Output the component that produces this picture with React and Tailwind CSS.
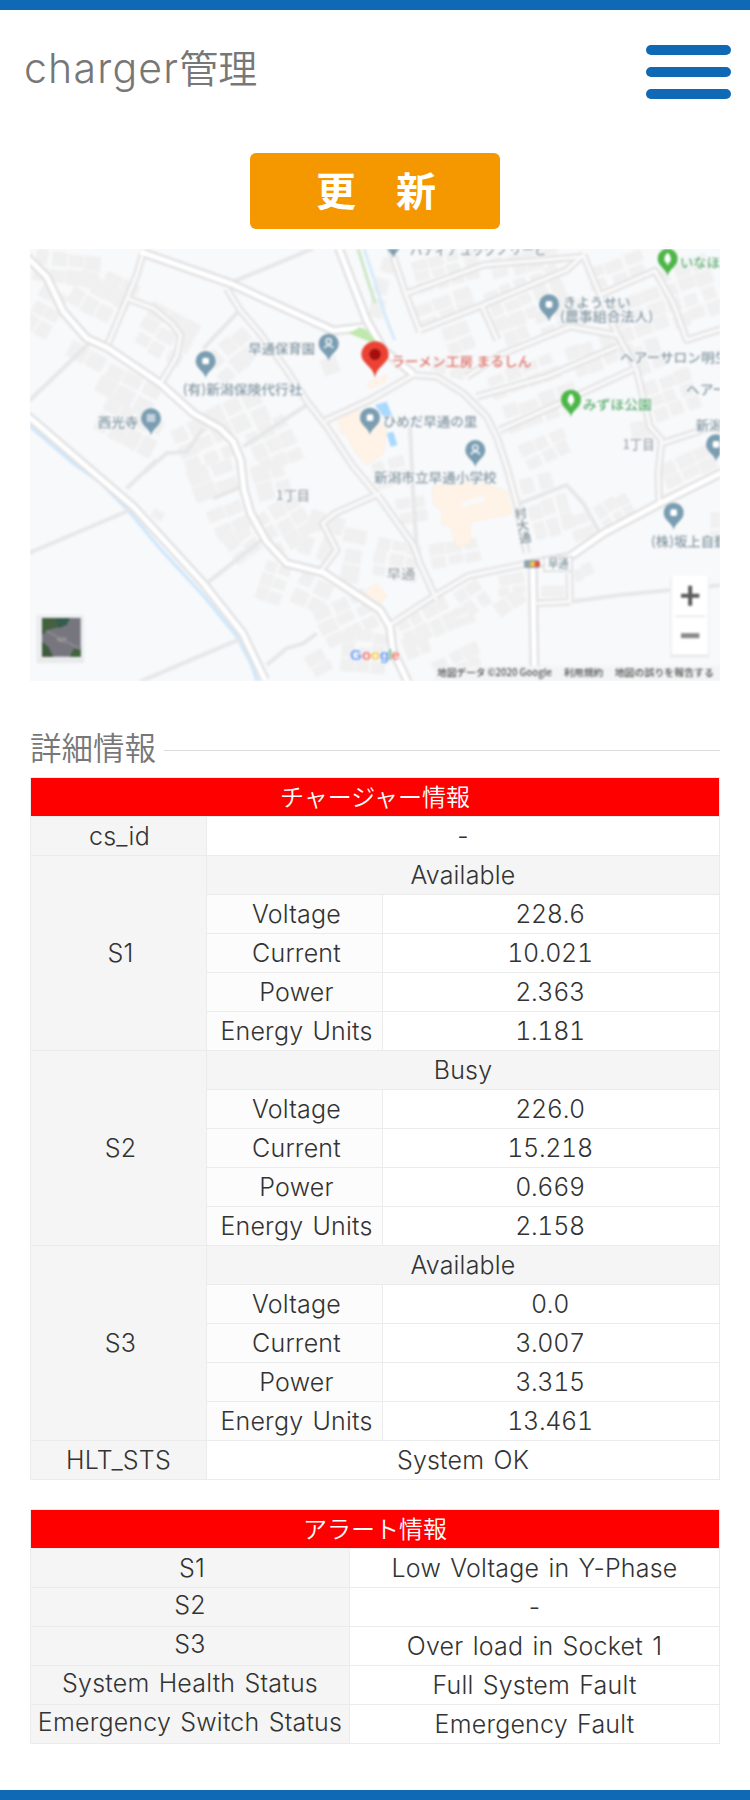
const SANS = "font-['Inter','Noto_Sans_CJK_JP',sans-serif]";
const CJK = "font-['Noto_Sans_CJK_JP',sans-serif]";

/* ---------- map data (map units: 3 per CSS pixel) ---------- */

const mainRoads = [
  "M20 50L80 110L130 215L200 295L265 325L420 430L520 520L600 565L640 605L662 660L672 750L692 820L740 905L800 970L910 998L990 1050L1080 1110L1110 1160L1118 1230L1170 1340",
  "M360 35L630 130L940 272L1030 262",
  "M955 20L1040 240L1090 330L1180 402",
  "M550 1030L340 800L200 680L20 525",
  "M550 1030L668 1180L735 1320",
  "M2110 695L1920 790L1750 880L1650 950L1530 972",
  "M1538 960L1544 1330",
];

const minorRoads = [
  "M372 30L350 105L320 178L265 310",
  "M320 175L400 205L455 250L482 285L470 350L425 425",
  "M620 145L660 210L720 280L800 390L865 490L920 560L1000 680L1080 775L1180 915L1200 970L1250 1080",
  "M915 542L1050 480L1180 405",
  "M1180 405L1250 410L1330 460L1400 530L1430 590L1460 680L1490 790L1520 940",
  "M1110 20L1160 170L1200 275",
  "M1160 160L1390 75L1690 50",
  "M1200 270L1390 195L1640 90L1690 45",
  "M1385 195L1432 300",
  "M1340 410L1440 345L1650 260L1790 285",
  "M1690 45L1740 165L1790 280L1850 390L1890 560L1925 600L1915 700L1918 790",
  "M1740 165L1905 92L1960 190L2000 300L2120 262",
  "M1370 470L1580 410L1790 320",
  "M1440 570L1620 490L1840 388",
  "M1925 610L2110 550",
  "M1525 970L1345 1008L1240 1070L1110 1155",
  "M1080 760L945 820L908 850L950 930L905 990",
  "M1550 1090L1650 1085",
  "M1648 1000L1650 1088",
];

const alleys = [
  "M640 125L880 25",
  "M660 210L550 325",
  "M20 490L205 312L240 310",
  "M865 492L670 620",
  "M550 565L500 635L440 640L370 700",
  "M320 745L410 660",
  "M20 942L330 810",
  "M560 1030L725 900",
  "M360 1325L665 1195",
  "M740 1275L800 1225L850 1210L890 1180",
  "M1170 560L1180 780L1190 920",
  "M1500 790L1640 735L1690 790L1740 880",
  "M1650 1085L1800 1065L2110 1035",
  "M580 775L665 740",
];

// clusters of houses: [x, y, width, height, rotation, columns, rows]
const clusters = [
  [40, 35, 200, 100, 8, 4, 2], [30, 140, 90, 150, 30, 2, 3], [150, 110, 150, 120, 30, 3, 2],
  [240, 110, 110, 90, 25, 2, 2], [355, 210, 170, 150, 28, 3, 3], [560, 290, 160, 110, -40, 3, 2],
  [140, 320, 120, 60, 30, 2, 1], [230, 390, 190, 110, 28, 3, 2], [230, 500, 200, 120, 28, 4, 2],
  [470, 530, 170, 150, -25, 3, 3], [560, 470, 180, 110, -25, 3, 2], [690, 540, 140, 150, -25, 3, 3],
  [900, 350, 70, 70, -20, 1, 1], [510, 665, 140, 110, -20, 2, 2], [700, 660, 110, 120, -15, 2, 2],
  [570, 790, 110, 100, -25, 2, 2], [620, 870, 90, 90, -35, 2, 2], [720, 780, 150, 150, -30, 3, 3],
  [850, 810, 110, 150, 20, 2, 2], [960, 860, 70, 170, 10, 1, 3], [720, 960, 80, 130, 20, 2, 3],
  [820, 1010, 110, 100, 25, 2, 2], [890, 1070, 180, 130, -25, 3, 3], [860, 1230, 80, 80, -30, 1, 2],
  [960, 1170, 140, 130, 5, 3, 3], [395, 800, 40, 40, 30, 1, 1],
  [1180, 40, 200, 100, -15, 4, 3], [1410, 30, 210, 70, -15, 4, 2], [1180, 165, 190, 80, -20, 3, 2],
  [1400, 110, 240, 130, -22, 5, 3], [1270, 250, 90, 90, -20, 2, 2], [1440, 220, 90, 90, -20, 2, 2],
  [1545, 190, 170, 90, -20, 3, 2], [1700, 55, 180, 80, -20, 3, 2], [1770, 160, 170, 130, -20, 3, 3],
  [1930, 60, 160, 190, -20, 3, 4], [1640, 290, 200, 100, -20, 4, 2], [1400, 370, 220, 80, -20, 4, 2],
  [1440, 460, 240, 90, -20, 4, 2], [1500, 580, 150, 90, -25, 3, 2], [1830, 300, 110, 100, -20, 2, 2],
  [1880, 400, 150, 130, -20, 3, 3], [1830, 540, 60, 60, -10, 1, 1], [1230, 360, 120, 50, 20, 2, 1],
  [1060, 50, 50, 190, 15, 1, 3], [1060, 650, 100, 90, -15, 2, 2], [1130, 770, 90, 80, -10, 2, 2],
  [1500, 700, 100, 60, -15, 2, 1], [1530, 770, 130, 120, -15, 3, 2], [1730, 770, 110, 90, -30, 3, 2],
  [1650, 820, 70, 80, -20, 1, 2], [1920, 640, 170, 80, -25, 3, 2], [1230, 900, 150, 80, -10, 3, 2],
  [1060, 900, 140, 120, 10, 3, 3], [1430, 1000, 90, 70, -10, 2, 2], [1560, 1030, 80, 50, 0, 1, 1],
  [1310, 1030, 90, 90, -35, 2, 2], [1130, 1090, 180, 110, -25, 4, 2], [1420, 1060, 100, 60, -35, 2, 1],
  [1300, 1090, 60, 70, -20, 1, 2], [1240, 1230, 150, 80, -25, 3, 2], [1150, 1180, 80, 70, -20, 2, 1],
  [1650, 970, 70, 50, -20, 2, 1], [2070, 810, 40, 110, 0, 1, 2],
];

const houses = (() => {
  let seed = 7;
  const rnd = () => {
    seed = (seed * 16807) % 2147483647;
    return seed / 2147483647;
  };
  const out = [];
  clusters.forEach(([x, y, w, h, r, cols, rows]) => {
    const cw = w / cols;
    const ch = h / rows;
    for (let i = 0; i < cols; i++) {
      for (let j = 0; j < rows; j++) {
        const bw = cw * (0.72 + rnd() * 0.28);
        const bh = ch * (0.7 + rnd() * 0.3);
        out.push({
          x: x + i * cw + rnd() * (cw - bw),
          y: y + j * ch + rnd() * (ch - bh),
          w: bw,
          h: bh,
          t: `rotate(${r} ${x + w / 2} ${y + h / 2})`,
        });
      }
    }
  });
  return out;
})();

function Pin({ x, y, color = "#7a9db1", kind = "dot" }) {
  return (
    <g transform={`translate(${x} ${y})`}>
      <path d="M0 50C-3 28 -30 22 -30 -2A30 30 0 0 1 30 -2C30 22 3 28 0 50Z" fill={color} />
      {kind === "dot" && <rect x="-10" y="-12" width="20" height="20" rx="5" fill="#fff" />}
      {kind === "tree" && <path d="M0 -20C11 -12 12 4 6 9H3V16H-3V9H-6C-12 4 -11 -12 0 -20Z" fill="#fff" />}
      {kind === "school" && (
        <g fill="none" stroke="#e8f0f4" strokeWidth="5">
          <circle cy="-9" r="8" />
          <path d="M-13 12C-9 0 9 0 13 12" />
        </g>
      )}
      {kind === "temple" && <rect x="-13" y="-15" width="26" height="24" rx="4" fill="#c3d3dc" />}
    </g>
  );
}

function Label({ x, y, w, children, fill = "#8699a3", size = 39, halo = true }) {
  return (
    <text
      x={x}
      y={y}
      textLength={w}
      lengthAdjust="spacingAndGlyphs"
      fontSize={size}
      fill={fill}
      stroke={halo ? "#f8f9fb" : "none"}
      strokeWidth={halo ? 6 : 0}
      paintOrder="stroke"
    >
      {children}
    </text>
  );
}

function MapView() {
  return (
    <div className="relative h-[432px] w-[690px] overflow-hidden bg-[#f8f9fb]">
      <svg viewBox="30 27 2070 1296" className={`block h-full w-full font-medium blur-[0.8px] ${CJK}`}>
        <g fill="#f0f0f0">
          {houses.map((b, i) => (
            <rect key={i} x={b.x} y={b.y} width={b.w} height={b.h} rx="4" transform={b.t} />
          ))}
        </g>
        <g fill="#fff3e7" stroke="#fdebd9" strokeWidth="3">
          <path d="M955 540L1010 510L1100 560L1090 640L1040 675L1010 640L980 585L965 580Z" />
          <path d="M1240 740L1370 725L1460 755L1475 820L1350 845L1350 910L1310 920L1295 860L1265 850L1270 820L1240 790Z" />
          <path d="M1045 430L1100 405L1095 425L1050 445Z" />
          <path d="M1040 1050L1070 1030L1098 1065L1080 1095L1035 1080Z" />
          <path d="M1120 95L1140 82L1150 105L1130 115Z" />
        </g>
        <path d="M1320 790L1395 765L1390 785L1330 800Z" fill="#f8f9fb" />
        <g fill="#a9d9fd">
          <path d="M1065 495L1100 485L1118 530L1090 530Z" />
          <path d="M1100 580L1120 575L1132 615L1112 620Z" />
        </g>
        <g fill="none" strokeLinejoin="round">
          <path d="M20 550L165 674L240 726L325 812L424 930L553 1070L648 1186L692 1268L714 1330" stroke="#cfe7fb" strokeWidth="10" />
          <path d="M1030 20L1060 110L1100 240L1124 300" stroke="#d6eafb" strokeWidth="9" />
          <path d="M1012 20L1040 110L1065 190" stroke="#cfe8cb" strokeWidth="10" />
          <g stroke="#e6e7e8" strokeWidth="12">{alleys.map((d) => <path key={d} d={d} />)}</g>
          <g stroke="#e5e5e6" strokeWidth="24">{minorRoads.map((d) => <path key={d} d={d} />)}</g>
          <g stroke="#e2e2e3" strokeWidth="30">{mainRoads.map((d) => <path key={d} d={d} />)}</g>
          <g stroke="#f9f9fa" strokeWidth="10">{minorRoads.map((d) => <path key={d} d={d} />)}</g>
          <g stroke="#fff" strokeWidth="15">{mainRoads.map((d) => <path key={d} d={d} />)}</g>
        </g>
        <path d="M985 280L1020 262L1040 270L1070 305L1050 305Z" fill="#bfe8ae" />

        <Label x={685} y={339} w={200}>早通保育園</Label>
        <Label x={488} y={461} w={360}>(有)新潟保険代行社</Label>
        <Label x={233} y={562} w={122}>西光寺</Label>
        <Label x={1113} y={379} w={422} fill="#dd6f66">ラーメン工房 まるしん</Label>
        <Label x={1088} y={559} w={284}>ひめだ早通の里</Label>
        <Label x={1628} y={201} w={204}>きようせい</Label>
        <Label x={1620} y={244} w={280}>(農事組合法人)</Label>
        <Label x={1800} y={366} w={325}>ヘアーサロン明生</Label>
        <Label x={1998} y={462} w={160}>ヘアーズ</Label>
        <Label x={1688} y={506} w={208} fill="#5fae72">みずほ公園</Label>
        <Label x={1980} y={80} w={120} fill="#5fae72">いなほ</Label>
        <Label x={1808} y={626} w={96} fill="#a3a9ad">1丁目</Label>
        <Label x={2027} y={569} w={120}>新潟県</Label>
        <Label x={1062} y={725} w={368}>新潟市立早通小学校</Label>
        <Label x={768} y={780} w={102} fill="#a3a9ad">1丁目</Label>
        <Label x={1100} y={1013} w={86} fill="#a3a9ad">早通</Label>
        <Label x={1893} y={918} w={270}>(株)坂上自動車</Label>
        <Label x={1170} y={41} w={410}>パティアュッグノリービ</Label>
        <text x="0" y="0" fontSize="37" fill="#8a9aa3" className="[writing-mode:vertical-rl]" transform="translate(1499 802) rotate(-10)">村大通</text>
        <rect x="1572" y="950" width="84" height="44" fill="#fafafa" stroke="#d5dadd" strokeWidth="4" />
        <Label x={1584} y={985} w={62} size={33} halo={false}>早通</Label>
        <rect x="1512" y="960" width="48" height="24" rx="6" fill="#93a3ab" />
        <circle cx="1538" cy="972" r="8" fill="#f6c445" />
        <circle cx="1552" cy="972" r="8" fill="#ea4e3d" />

        <Pin x={926} y={313} kind="school" />
        <Pin x={557} y={365} />
        <Pin x={393} y={537} kind="temple" />
        <Pin x={1050} y={535} />
        <Pin x={1120} y={5} />
        <Pin x={1587} y={195} />
        <Pin x={1366} y={632} kind="school" />
        <Pin x={1961} y={820} />
        <Pin x={2088} y={615} />
        <Pin x={1943} y={58} color="#4cb648" kind="tree" />
        <Pin x={1653} y={481} color="#4cb648" kind="tree" />
        <path d="M1065 414C1060 378 1024 372 1024 343A41 39 0 0 1 1106 343C1106 372 1070 378 1065 414Z" fill="#ea4335" />
        <circle cx="1065" cy="343" r="17" fill="#a50e0e" />

        <text y="1259" fontSize="46" fontWeight="700" stroke="#f8f9fb" strokeWidth="5" paintOrder="stroke" className="font-['Liberation_Sans',sans-serif]">
          <tspan x="990" fill="#6f9ff5">G</tspan>
          <tspan x="1025" fill="#ec7f77">o</tspan>
          <tspan x="1052" fill="#f8ce5c">o</tspan>
          <tspan x="1079" fill="#6f9ff5">g</tspan>
          <tspan x="1104" fill="#79c08b">l</tspan>
          <tspan x="1114" fill="#ec7f77">e</tspan>
        </text>

        <rect x="1245" y="1278" width="860" height="50" fill="#f3f4f5" />
        <Label x={1252} y={1307} w={344} size={29} fill="#4c4c4c" halo={false}>地図データ ©2020 Google</Label>
        <Label x={1632} y={1307} w={118} size={29} fill="#4c4c4c" halo={false}>利用規約</Label>
        <Label x={1784} y={1307} w={298} size={29} fill="#4c4c4c" halo={false}>地図の誤りを報告する</Label>

        <rect x="50" y="1126" width="142" height="144" rx="6" fill="#e9eaec" />
        <rect x="56" y="1124" width="132" height="132" fill="#ebecee" />
        <rect x="66" y="1134" width="116" height="116" fill="#77767f" />
        <g>
          <path d="M66 1134H110L120 1160L90 1168L66 1185Z" fill="#44603f" />
          <path d="M108 1134H150L140 1155L116 1164Z" fill="#335c4c" />
          <path d="M66 1205L85 1220L100 1250H66Z" fill="#3f5c3c" />
          <path d="M160 1228L182 1222V1250H150Z" fill="#42643d" />
          <path d="M112 1190L140 1194L136 1208L112 1202Z" fill="#a79c92" />
          <path d="M78 1172L182 1228" stroke="#888790" strokeWidth="7" fill="none" />
        </g>

        <rect x="1950" y="1010" width="118" height="244" rx="6" fill="#ecedef" />
        <rect x="1955" y="1007" width="109" height="236" rx="4" fill="#fff" />
        <path d="M1966 1129H2056" stroke="#ededed" strokeWidth="6" />
        <path d="M1983 1067H2038M2010.500 1037V1097" stroke="#5c5c5c" strokeWidth="12" />
        <path d="M1983 1187H2038" stroke="#8a8a8a" strokeWidth="15" />
      </svg>
    </div>
  );
}

/* ---------- tables ---------- */

const sockets = [
  { id: "S1", status: "Available", values: ["228.6", "10.021", "2.363", "1.181"] },
  { id: "S2", status: "Busy", values: ["226.0", "15.218", "0.669", "2.158"] },
  { id: "S3", status: "Available", values: ["0.0", "3.007", "3.315", "13.461"] },
];
const metrics = ["Voltage", "Current", "Power", "Energy Units"];

const alerts = [
  ["S1", "Low Voltage in Y-Phase"],
  ["S2", "-"],
  ["S3", "Over load in Socket 1"],
  ["System Health Status", "Full System Fault"],
  ["Emergency Switch Status", "Emergency Fault"],
];

function Cell({ className = "bg-white", children }) {
  return (
    <div className={`flex items-center justify-center whitespace-nowrap leading-[38px] ${className}`}>{children}</div>
  );
}

function TableTitle({ className, children }) {
  return (
    <div className={`flex items-center justify-center bg-[#ff0000] pb-0.5 text-2xl font-[350] leading-none tracking-normal text-white ${CJK} ${className}`}>
      {children}
    </div>
  );
}

const tableText = "text-[25px] font-light tracking-[0.2px] [word-spacing:2px] text-[#333]";

export default function App() {
  return (
    <div className={`flex h-[1800px] w-[750px] flex-col border-y-10 border-[#1069b4] bg-white ${SANS}`}>
      <header className="flex h-[143px] items-start justify-between pl-6 pr-[19px]">
        <h1 className="mt-8 text-[41px] font-light leading-[48px] text-[#777]">
          <span className="tracking-[1.2px]">charger</span>
          <span className={`text-[39px] font-[350] ${CJK}`}>管理</span>
        </h1>
        <button type="button" aria-label="menu" className="mt-[35px] flex w-[85px] flex-col gap-3">
          <span className="h-2.5 rounded-[5px] bg-[#1069b4]"></span>
          <span className="h-2.5 rounded-[5px] bg-[#1069b4]"></span>
          <span className="h-2.5 rounded-[5px] bg-[#1069b4]"></span>
        </button>
      </header>

      <main className="flex flex-col px-[30px]">
        <button type="button" className={`flex h-[76px] w-[250px] items-center justify-center self-center rounded-md bg-[#f59800] pb-1 pl-0.5 text-[40px] font-bold leading-none text-white ${CJK}`}>
          更　新
        </button>

        <div className="mt-5">
          <MapView />
        </div>

        <div className="mt-[45px] flex h-10 items-center gap-2">
          <h2 className={`w-[126px] whitespace-nowrap text-[31.5px] font-[350] leading-9 text-[#777] ${CJK}`}>詳細情報</h2>
          <div className="mt-2 h-px flex-1 bg-[#dcdcdc]"></div>
        </div>

        <section className={`mt-[11px] grid auto-rows-[38px] grid-cols-[175px_175px_336px] gap-px bg-[#ebebeb] p-px ${tableText}`}>
          <TableTitle className="col-span-3">チャージャー情報</TableTitle>
          <Cell className="bg-[#f5f5f5] pl-0.5">cs_id</Cell>
          <Cell className="col-span-2 bg-white">-</Cell>
          {sockets.map((s) => [
            <Cell key={s.id} className="row-span-5 bg-[#f5f5f5] pl-1">{s.id}</Cell>,
            <Cell key={s.id + "status"} className="col-span-2 bg-[#f5f5f5]">{s.status}</Cell>,
            metrics.map((m, i) => [
              <Cell key={s.id + m} className="bg-[#fcfcfc] pl-1">{m}</Cell>,
              <Cell key={s.id + m + "v"} className="bg-white pr-0.5 tracking-[-0.35px] tabular-nums">{s.values[i]}</Cell>,
            ]),
          ])}
          <Cell className="bg-[#f5f5f5]">HLT_STS</Cell>
          <Cell className="col-span-2 bg-white">System OK</Cell>
        </section>

        <section className={`mt-[29px] grid auto-rows-[38px] grid-cols-[318px_369px] gap-px bg-[#ebebeb] p-px ${tableText}`}>
          <TableTitle className="col-span-2">アラート情報</TableTitle>
          {alerts.map(([name, value], i) => [
            <Cell key={name} className={i === 0 ? "bg-[#f5f5f5] pl-1" : "bg-[#f5f5f5] pb-[5px]"}>{name}</Cell>,
            <Cell key={name + "v"}>{value}</Cell>,
          ])}
        </section>
      </main>
    </div>
  );
}
